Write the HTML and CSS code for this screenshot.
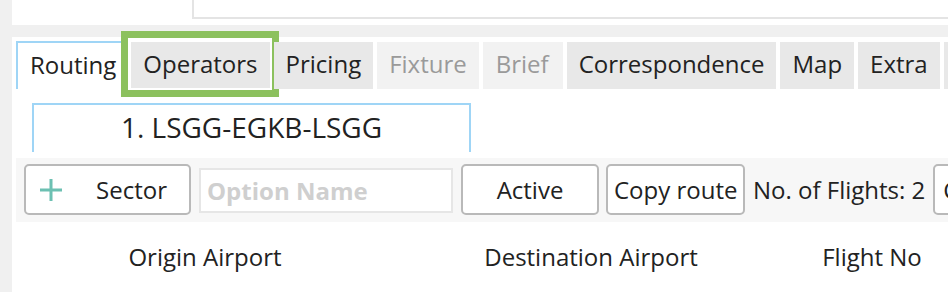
FILE: index.html
```html
<!DOCTYPE html>
<html lang="en">
<head>
    <meta charset="UTF-8">
    <meta name="viewport" content="width=device-width, initial-scale=1.0">
    <title>Trip Routing</title>
    <link rel="stylesheet" href="styles.css">
</head>
<body>
    <div class="page">
        <!-- Top search strip -->
        <div class="top-panel">
            <div class="search-box"></div>
        </div>

        <div class="main-panel">
            <!-- Main tabs -->
            <div class="tabs">
                <div class="tab active">Routing</div>
                <div class="tab highlight">Operators</div>
                <div class="tab">Pricing</div>
                <div class="tab disabled">Fixture</div>
                <div class="tab disabled brief">Brief</div>
                <div class="tab">Correspondence</div>
                <div class="tab">Map</div>
                <div class="tab">Extra</div>
                <div class="tab">Documents</div>
            </div>

            <!-- Route option tabs -->
            <div class="route-tabs">
                <div class="route-tab">1. LSGG-EGKB-LSGG</div>
            </div>

            <!-- Toolbar -->
            <div class="toolbar">
                <button class="btn btn-sector">
                    <svg width="22" height="22" viewBox="0 0 22 22">
                        <path d="M11 0 V22 M0 11 H22" stroke="#6cc0b2" stroke-width="3" fill="none"/>
                    </svg>
                    <span>Sector</span>
                </button>
                <input type="text" class="option-name" placeholder="Option Name">
                <button class="btn btn-active">Active</button>
                <button class="btn btn-copy">Copy route</button>
                <span class="flights">No. of Flights: 2</span>
                <button class="btn">Calculate</button>
            </div>

            <!-- Sector column headers -->
            <div class="col-headers">
                <div>Origin Airport</div>
                <div>Destination Airport</div>
                <div>Flight No</div>
            </div>
        </div>
    </div>
</body>
</html>
```

FILE: styles.css
```css
html, body {
    margin: 0;
    padding: 0;
    height: 100%;
    overflow: hidden;
}
body {
    font-family: 'Open Sans', 'Liberation Sans', sans-serif;
    font-size: 24px;
    color: #222;
    background-color: #f0f0f0;
}
.page {
    padding-left: 12px;
    height: 100%;
    display: flex;
    flex-direction: column;
}
.top-panel {
    height: 25px;
    background: #fff;
    overflow: hidden;
}
.search-box {
    margin-left: 180px;
    margin-top: -10px;
    height: 27px;
    border-left: 2px solid #e4e4e4;
    border-bottom: 2px solid #e4e4e4;
    background: #fff;
}
.main-panel {
    flex: 1;
    margin-top: 12px;
    background: #fff;
    padding: 4px 0 0 4px;
}

/* main tabs */
.tabs {
    display: flex;
    align-items: flex-end;
    gap: 4px;
    height: 48px;
    white-space: nowrap;
}
.tab {
    flex: none;
    position: relative;
    box-sizing: border-box;
    height: 47px;
    line-height: 44px;
    padding: 0 12px;
    background: #e8e8e8;
}
.tab.active {
    height: 48px;
    line-height: 44px;
    background: #fff;
    border-top: 2px solid #9fd5f6;
    border-left: 2px solid #9fd5f6;
    padding: 0 13px 0 12px;
}
.tab.disabled {
    background: #f2f2f2;
    color: #9a9a9a;
}
.tab.brief {
    padding: 0 14px 0 13px;
}
.tab.highlight {
    margin-left: -2px;
}
.tab.highlight::after {
    content: '';
    position: absolute;
    top: -11px;
    bottom: -8px;
    left: -10px;
    right: -9px;
    border: 7px solid #8cc15e;
    box-shadow: inset 0 0 0 2px #fff;
}

/* route tabs */
.route-tabs {
    margin-top: 14px;
    padding-left: 16px;
}
.route-tab {
    box-sizing: border-box;
    width: 439px;
    height: 49px;
    line-height: 44px;
    font-size: 28px;
    text-align: center;
    border: 2px solid #9fd5f6;
    border-bottom: none;
}

/* toolbar */
.toolbar {
    margin-top: 6px;
    height: 64px;
    box-sizing: border-box;
    padding: 6px 0 0 8px;
    background: #f7f7f7;
    display: flex;
    align-items: flex-start;
    gap: 8px;
    white-space: nowrap;
}
.btn {
    flex: none;
    box-sizing: border-box;
    height: 51px;
    padding: 0 8px;
    border: 2px solid #b9b9b9;
    border-radius: 5px;
    background: #fff;
    font-family: inherit;
    font-size: 24px;
    color: #222;
}
.btn-sector {
    width: 167px;
    display: flex;
    align-items: center;
    padding-left: 14px;
}
.btn-sector span {
    margin-left: 34px;
}
.btn-active {
    width: 138px;
}
.btn-copy {
    width: 139px;
    padding: 0 6px;
    margin-left: -1px;
}
.option-name {
    flex: none;
    box-sizing: border-box;
    width: 254px;
    height: 45px;
    margin-top: 4px;
    padding: 0 6px;
    border: 2px solid #e6e6e6;
    font-family: inherit;
    font-size: 24px;
    font-weight: bold;
    outline: none;
}
.option-name::placeholder {
    color: #cfcfcf;
}
.flights {
    line-height: 51px;
}

/* column headers */
.col-headers {
    margin-top: 18px;
    display: grid;
    grid-template-columns: 378px 394px 168px;
    line-height: 33px;
    text-align: center;
}
```
